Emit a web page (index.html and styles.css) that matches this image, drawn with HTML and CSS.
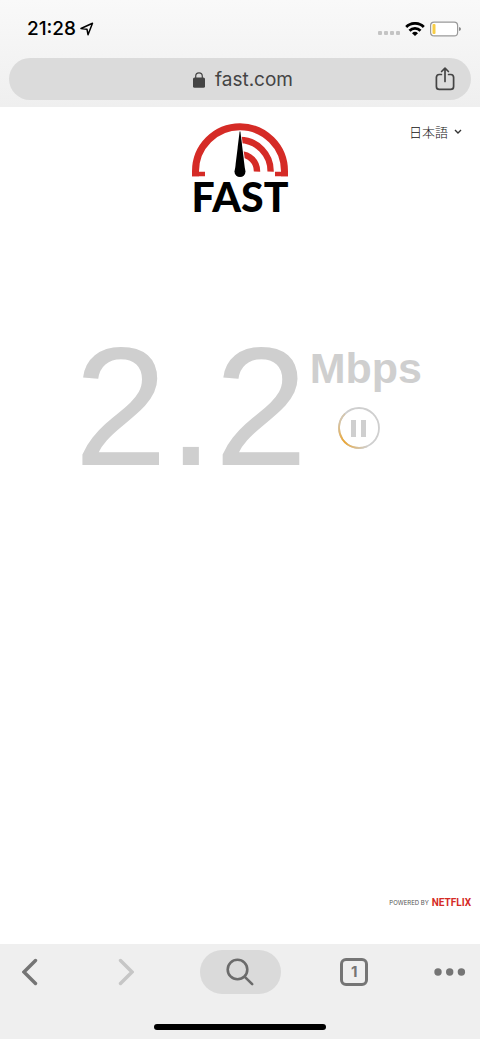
FILE: index.html
```html
<!DOCTYPE html>
<html lang="ja">
<head>
<meta charset="utf-8">
<meta name="viewport" content="width=device-width, initial-scale=1">
<title>FAST</title>
<link rel="stylesheet" href="styles.css">
</head>
<body>
<header class="browser-top">
  <div class="status">
    <span class="clock">21:28
      <svg width="14" height="14" viewBox="0 0 14 14" aria-hidden="true"><path d="M1 6.500 12.500 1.200 8 12.700 7 7.300Z" fill="none" stroke="#000" stroke-width="1.500" stroke-linejoin="round"/></svg>
    </span>
    <span class="signals">
      <svg width="22" height="14" viewBox="0 0 22 14" aria-hidden="true"><g fill="#c4c4c4"><rect x="0" y="9" width="4" height="4" rx="1"/><rect x="6" y="9" width="4" height="4" rx="1"/><rect x="12" y="9" width="4" height="4" rx="1"/><rect x="18" y="9" width="4" height="4" rx="1"/></g></svg>
      <svg width="20" height="14" viewBox="0 0 20 14" aria-hidden="true"><g fill="none" stroke="#000" stroke-width="2.8"><path d="M1.200 5a12.500 12.500 0 0 1 17.600 0"/><path d="M4.500 8.700a7.800 7.800 0 0 1 11 0"/></g><path d="M7 11.300a4.300 4.300 0 0 1 6 0L10 14Z"/></svg>
      <svg width="31" height="16" viewBox="0 0 31 16" aria-hidden="true"><rect x=".6" y="1.100" width="27" height="13.800" rx="3.500" fill="#fff" stroke="#999" stroke-width="1.200"/><rect x="2.500" y="3" width="3" height="10" rx="1" fill="#f7cd46"/><path d="M29 6q2 .5 2 2t-2 2Z" fill="#888"/></svg>
    </span>
  </div>
  <div class="address">
    <span class="site">
      <svg width="12" height="16" viewBox="0 0 12 16" aria-hidden="true"><path d="M2.700 7V4.200a3.300 3.300 0 0 1 6.600 0V7" fill="none" stroke="#444" stroke-width="1.200"/><rect y="5.500" width="12" height="10.300" rx="1.600" fill="#444"/></svg>
      <span>fast.com</span>
    </span>
    <button class="plain share" aria-label="Share">
      <svg width="20" height="24" viewBox="0 0 20 24"><g fill="none" stroke="#444" stroke-width="1.700" stroke-linecap="round" stroke-linejoin="round"><path d="M6.400 7.500H4.200A3 3 0 0 0 1.400 10.400v9a3 3 0 0 0 3 3h11.200a3 3 0 0 0 3-3v-9a3 3 0 0 0-2.800-2.900h-2.200"/><path d="M10 14.500V1.500M6.600 4.500 10 1.200l3.400 3.300"/></g></svg>
    </button>
  </div>
</header>

<main class="page">
  <div class="masthead">
    <h1 class="logo">
      <svg width="96" height="56" viewBox="0 0 96 56" aria-hidden="true">
        <g fill="none" stroke="#d52b26">
          <path stroke-width="7" d="M3.500 53.300V48.300a44.500 44.500 0 0 1 89 0v5"/>
          <path stroke-width="4.700" d="M0 51H13M83 51H96"/>
          <path stroke-width="6.400" d="M48 17A31 31 0 0 1 78.600 48.600M48 31.200A17 17 0 0 1 65 48.600"/>
        </g>
        <path d="M47.300 12 43 45H54L49.500 12Z" fill="#fff"/>
        <path d="M47.600 8.500 43 46.500H53L48.400 8.500Z"/><circle cx="48" cy="48.500" r="5.500"/>
      </svg>
      <span>FAST</span>
    </h1>
    <button class="plain language">日本語
      <svg width="8" height="6" viewBox="0 0 8 6" aria-hidden="true"><path d="m1 1 3 3 3-3" fill="none" stroke="#333" stroke-width="1.400"/></svg>
    </button>
  </div>

  <section class="result" aria-label="Speed">
    <span class="speed">2.2</span>
    <div class="side">
      <span class="unit">Mbps</span>
      <button class="plain pause" aria-label="Pause">
        <svg width="42" height="42" viewBox="0 0 42 42">
          <defs><linearGradient id="progress" x1="0" y1="0" x2="1" y2="1"><stop stop-color="#cfcfcf"/><stop offset=".5" stop-color="#eda52e"/><stop offset="1" stop-color="#cfcfcf"/></linearGradient></defs>
          <circle cx="21" cy="21" r="20" fill="none" stroke="#cfcfcf" stroke-width="1.800"/>
          <path d="M7 6.700A20 20 0 0 0 29 39.300" fill="none" stroke="url(#progress)" stroke-width="1.800"/>
          <path d="M13 13h5v17h-5ZM23 13h5v17h-5Z" fill="#cfcfcf"/>
        </svg>
      </button>
    </div>
  </section>

  <footer class="credit"><span>POWERED BY</span><span class="brand">NETFLIX</span></footer>
</main>

<nav class="toolbar" aria-label="Browser">
  <div class="tools">
    <button class="plain tool" aria-label="Back"><svg width="16" height="28" viewBox="0 0 16 28"><path d="M13.500 2.500 2 14l11.500 11.500" fill="none" stroke="#757575" stroke-width="3.400" stroke-linecap="round"/></svg></button>
    <button class="plain tool" aria-label="Forward"><svg width="16" height="28" viewBox="0 0 16 28"><path d="M2.500 2.500 14 14 2.500 25.500" fill="none" stroke="#c6c6c6" stroke-width="3.400" stroke-linecap="round"/></svg></button>
    <button class="plain tool search" aria-label="Search"><svg width="30" height="30" viewBox="0 0 30 30"><g fill="none" stroke="#6b6b6b" stroke-width="2.600" stroke-linecap="round"><circle cx="12.500" cy="12.500" r="9.800"/><path d="m19.800 19.800 7.400 7.400"/></g></svg></button>
    <button class="plain tool" aria-label="1 tab"><span class="tabs">1</span></button>
    <button class="plain tool" aria-label="More"><svg width="32" height="8" viewBox="0 0 32 8"><g fill="#757575"><circle cx="4" cy="4" r="3.700"/><circle cx="15.700" cy="4" r="3.700"/><circle cx="27.400" cy="4" r="3.700"/></g></svg></button>
  </div>
  <div class="home"></div>
</nav>
</body>
</html>
```
FILE: styles.css
```css
* { box-sizing: border-box; }
body {
  margin: 0;
  min-height: 100vh;
  display: flex;
  flex-direction: column;
  background: #fff;
  color: #000;
  font-family: "Liberation Sans", "Noto Sans CJK JP", sans-serif;
}
svg { display: block; flex: none; }
.plain {
  display: flex;
  align-items: center;
  justify-content: center;
  padding: 0;
  border: 0;
  background: none;
  color: inherit;
  font: inherit;
}
.browser-top {
  padding: 0 9px 7px;
  background: linear-gradient(#f9f9f9, #efefef);
}
.status {
  display: flex;
  align-items: center;
  justify-content: space-between;
  height: 58px;
  padding: 0 10px 0 18px;
}
.clock {
  display: flex;
  align-items: center;
  gap: 4px;
  font: 500 19px/24px Inter, sans-serif;
}
.signals { display: flex; align-items: center; gap: 5px; }
.address {
  display: grid;
  grid-template-columns: 1fr auto 1fr;
  align-items: center;
  height: 42px;
  padding: 0 16px;
  border-radius: 21px;
  background: #dbdbdb;
  color: #444;
}
.site {
  grid-column: 2;
  display: flex;
  align-items: center;
  gap: 10px;
  padding: 1px 0 0 6px;
  font: 19px/24px Inter, sans-serif;
}
.share { justify-self: end; }
.page { flex: 1; display: flex; flex-direction: column; }
.masthead {
  display: grid;
  grid-template-columns: 1fr auto 1fr;
  align-items: start;
  padding: 16px 18px 0;
}
.logo {
  grid-column: 2;
  display: flex;
  flex-direction: column;
  align-items: center;
  margin: 0;
  font: 900 41px/36px Lato, sans-serif;
}
.language {
  justify-self: end;
  gap: 6px;
  color: #111;
  font-family: "Noto Sans CJK JP", sans-serif;
  font-size: 13px;
  font-weight: 300;
  line-height: 18px;
}
.result {
  display: flex;
  justify-content: center;
  gap: 2px;
  margin-top: 108px;
  padding-left: 16px;
  color: #cfcfcf;
}
.speed { font-size: 168px; line-height: 168px; }
.side { padding-top: 21px; }
.unit { display: block; font-size: 43px; line-height: 48px; font-weight: 700; }
.pause { margin: 15px 0 0 28px; }
.credit {
  display: flex;
  align-items: center;
  justify-content: flex-end;
  gap: 3px;
  margin-top: auto;
  padding: 0 9px 34px;
  color: #555;
  font: 6px/14px Inter, sans-serif;
}
.brand {
  color: #d52b26;
  font: 700 10px/14px Roboto, sans-serif;
}
.toolbar { padding: 6px 8px 9px; background: #efefef; }
.tools { display: flex; align-items: center; justify-content: space-between; }
.tool { width: 44px; height: 44px; }
.search {
  width: 81px;
  border-radius: 22px;
  background: #dadada;
}
.tabs {
  width: 28px;
  height: 28px;
  border: 3px solid #757575;
  border-radius: 6px;
  color: #757575;
  font: 700 15px/22px Inter, sans-serif;
}
.home {
  width: 172px;
  height: 6px;
  margin: 30px auto 0;
  border-radius: 3px;
  background: #000;
}
```
